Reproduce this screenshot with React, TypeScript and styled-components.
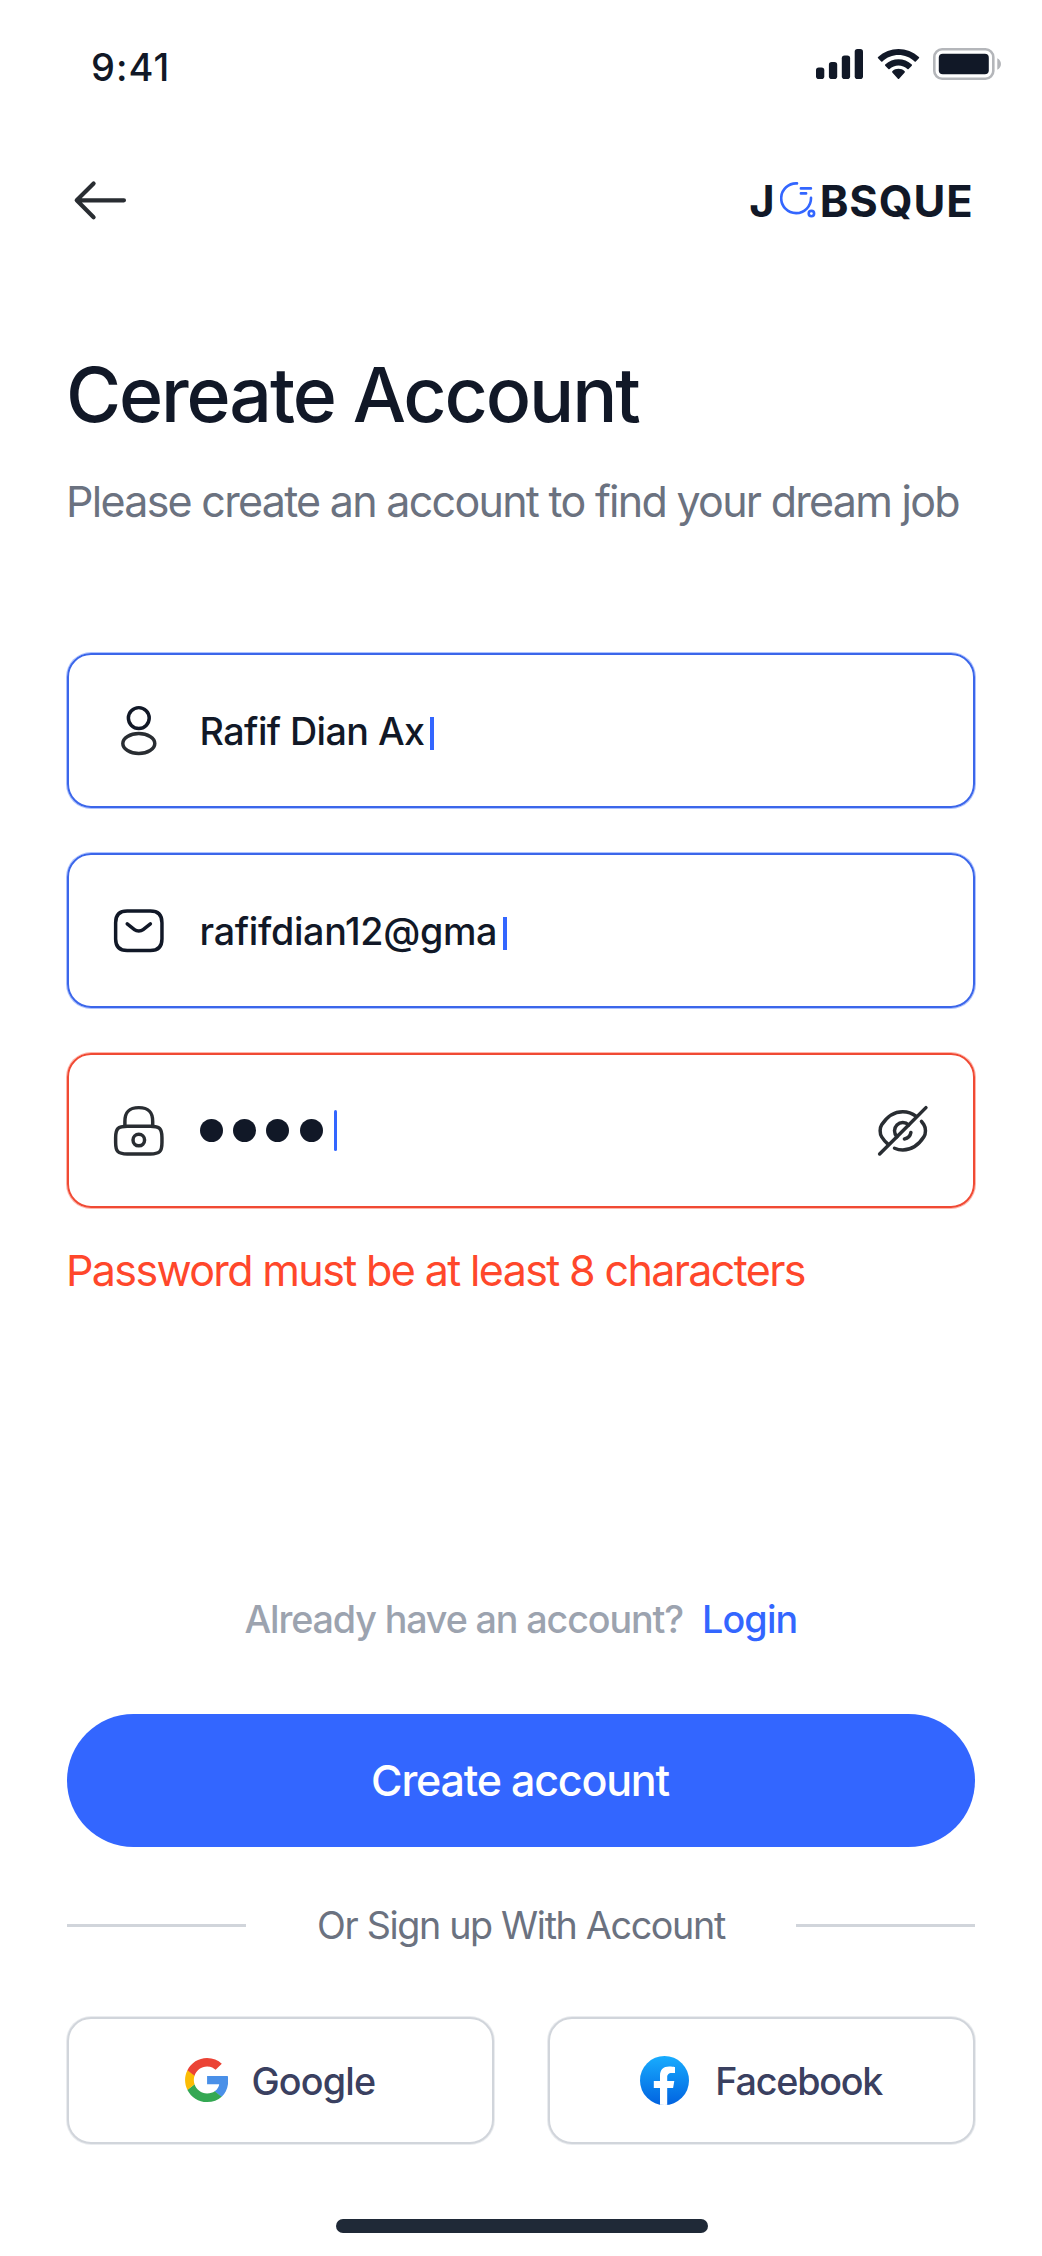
import React from "react";
import styled, { createGlobalStyle } from "styled-components";

const GlobalStyle = createGlobalStyle`
  *, *::before, *::after { box-sizing: border-box; }
  body { margin: 0; background: #fff; }
  svg { display: block; flex: none; }
`;

const color = {
  ink: "#111827",
  icon: "#292d32",
  muted: "#6b7280",
  faint: "#9ca3af",
  line: "#d1d5db",
  primary: "#3366ff",
  danger: "#ff472b",
  social: "#3a4060",
};

const Screen = styled.main`
  width: 1042px;
  height: 2256px;
  display: flex;
  flex-direction: column;
  background: #fff;
  color: ${color.ink};
  font-family: Inter, "Liberation Sans", sans-serif;
  white-space: nowrap;
  overflow: hidden;
`;

const StatusBar = styled.header`
  height: 133px;
  flex: none;
  padding: 0 41px 0 91px;
  display: flex;
  align-items: center;
  justify-content: space-between;
`;

const Clock = styled.span`
  font-size: 38px;
  font-weight: 500;
  letter-spacing: 1px;
`;

const StatusIcons = styled.div`
  display: flex;
  align-items: center;
  gap: 13.5px;
  margin-bottom: 5px;
`;

const TopBar = styled.nav`
  height: 134px;
  flex: none;
  padding: 0 68.5px 0 66.7px;
  display: flex;
  align-items: center;
  justify-content: space-between;
`;

const IconButton = styled.button`
  display: flex;
  padding: 0;
  border: 0;
  background: none;
`;

const Logo = styled.div`
  display: flex;
  align-items: center;
  font-size: 43.5px;
  line-height: 60px;
  font-weight: 700;
  letter-spacing: 0.9px;
`;

const LogoText = styled.span`
  padding-top: 1px;
`;

const LogoMark = styled.svg`
  margin: 0 4px 0 4px;
`;

const Content = styled.section`
  padding: 78px 67px 0;
  display: flex;
  flex-direction: column;
`;

const Title = styled.h1`
  margin: 0 0 0 -1px;
  font-size: 75.2px;
  line-height: 100px;
  font-weight: 500;
  letter-spacing: -2.12px;
`;

const Subtitle = styled.p`
  margin: 26px 0 0 -1px;
  color: ${color.muted};
  font-size: 43px;
  line-height: 60px;
  letter-spacing: -1.72px;
`;

const Form = styled.div`
  margin-top: 122px;
  display: flex;
  flex-direction: column;
  gap: 45px;
`;

const Field = styled.div<{ $invalid?: boolean }>`
  height: 155px;
  padding: 0 42px;
  display: flex;
  align-items: center;
  border: 2px solid ${(p) => (p.$invalid ? "#f04a34" : "#3b66ea")};
  border-radius: 24px;
  box-shadow: 0 0 0 1px ${(p) => (p.$invalid ? "rgba(255, 71, 43, .4)" : "rgba(51, 102, 255, .4)")};
`;

const FieldValue = styled.div<{ $tracking?: number }>`
  flex: 1;
  margin-left: 33px;
  display: flex;
  align-items: center;
  font-size: 37.7px;
  line-height: 50px;
  font-weight: 500;
  letter-spacing: ${(p) => p.$tracking ?? 0}px;
`;

const Caret = styled.span`
  width: 4px;
  height: 33px;
  margin: 6px 0 0 6px;
  background: ${color.primary};
`;

const ThinCaret = styled.span`
  width: 3px;
  height: 41px;
  margin-left: 11px;
  border-radius: 1.5px;
  background: ${color.primary};
`;

const Dots = styled.span`
  display: flex;
  gap: 10.4px;
`;

const Dot = styled.i`
  flex: none;
  width: 23px;
  height: 23px;
  border-radius: 50%;
  background: ${color.ink};
`;

const ErrorText = styled.p`
  margin: 32px 0 0 -1px;
  color: ${color.danger};
  font-size: 43px;
  line-height: 60px;
  letter-spacing: -1.64px;
`;

const Footer = styled.section`
  margin-top: 294px;
  padding: 0 67px;
  display: flex;
  flex-direction: column;
`;

const LoginRow = styled.div`
  display: flex;
  justify-content: center;
  gap: 19px;
  font-size: 37.7px;
  line-height: 50px;
  font-weight: 500;
`;

const Prompt = styled.span`
  color: ${color.faint};
  letter-spacing: -1.14px;
`;

const LoginLink = styled.a`
  color: ${color.primary};
  letter-spacing: -0.8px;
`;

const PrimaryButton = styled.button`
  height: 133px;
  margin-top: 70px;
  padding: 0 2px 2px 0;
  border: 0;
  border-radius: 67px;
  background: ${color.primary};
  color: #fff;
  font: 500 43px/60px Inter, "Liberation Sans", sans-serif;
  letter-spacing: -1.21px;
`;

const Divider = styled.div`
  margin-top: 53px;
  height: 50px;
  display: flex;
  align-items: center;
  justify-content: space-between;
  color: ${color.muted};
  font-size: 37.7px;
  line-height: 50px;
  letter-spacing: -1.35px;

  &::before,
  &::after {
    content: "";
    width: 179px;
    height: 3px;
    background: ${color.line};
  }
`;

const SocialRow = styled.div`
  margin-top: 67px;
  display: grid;
  grid-template-columns: 1fr 1fr;
  column-gap: 54px;
`;

const SocialButton = styled.button<{ $tracking: number; $gap: number }>`
  height: 127px;
  padding: 0 1px 0 0;
  display: flex;
  align-items: center;
  justify-content: center;
  gap: ${(p) => p.$gap}px;
  border: 2px solid ${color.line};
  border-radius: 24px;
  box-shadow: 0 0 0 1px rgba(209, 213, 219, 0.45);
  background: #fff;
  color: ${color.social};
  font: 500 37.7px/50px Inter, "Liberation Sans", sans-serif;
  letter-spacing: ${(p) => p.$tracking}px;
`;

const HomeIndicator = styled.div`
  width: 372px;
  height: 14px;
  margin: 75px 0 0 336px;
  border-radius: 7px;
  background: #1f2937;
`;

const LineIcon = ({ size = 55.6, children }: { size?: number; children: React.ReactNode }) => (
  <svg
    width={size}
    height={size}
    viewBox="0 0 24 24"
    fill="none"
    stroke={color.icon}
    strokeWidth="1.5"
    strokeLinecap="round"
    strokeLinejoin="round"
  >
    {children}
  </svg>
);

const SignalIcon = () => (
  <svg width="47" height="30" viewBox="0 0 47 30" fill={color.ink}>
    <rect x="0" y="18.5" width="8.3" height="11.5" rx="2.8" />
    <rect x="12.9" y="13" width="8.3" height="17" rx="2.8" />
    <rect x="25.8" y="6.5" width="8.3" height="23.5" rx="2.8" />
    <rect x="38.7" y="0" width="8.3" height="30" rx="2.8" />
  </svg>
);

const WifiIcon = () => (
  <svg width="43" height="31" viewBox="0 0 43 31" fill={color.ink}>
    <path d="M21.5 6.1c6 0 11.8 2.3 16.1 6.4.3.3.8.3 1.2 0l3.1-3.2c.4-.4.4-.9 0-1.2C30.5-2.7 12.5-2.7 1.1 8.1c-.4.3-.4.8 0 1.2l3.1 3.2c.4.3.9.3 1.2 0C9.7 8.4 15.5 6.1 21.5 6.1Z" />
    <path d="M21.5 16.4c3.3 0 6.5 1.2 8.9 3.5.4.3.9.3 1.2 0l3.2-3.2c.3-.4.3-.9 0-1.2-7.5-7-19.1-7-26.6 0-.3.3-.3.8 0 1.2l3.2 3.2c.3.3.8.3 1.2 0 2.4-2.3 5.6-3.5 8.9-3.5Z" />
    <path d="M27.7 23.4c.3-.3.3-.9 0-1.2-3.6-3.2-8.8-3.2-12.4 0-.3.3-.3.9 0 1.2l5.6 6.3c.3.4.9.4 1.2 0Z" />
  </svg>
);

const BatteryIcon = () => (
  <svg width="68" height="32" viewBox="0 0 68 32" fill="none">
    <rect x="1.3" y="1.3" width="59" height="29.4" rx="7.8" stroke="#b4b6ba" strokeWidth="2.6" />
    <rect x="5.8" y="5.8" width="50" height="20.4" rx="4" fill={color.ink} />
    <path d="M64.3 10.3v11.4c4.9-2.2 4.9-9.2 0-11.4Z" fill="#b4b6ba" />
  </svg>
);

const GoogleIcon = () => (
  <svg width="43.3" height="44.2" viewBox="0 0 256 262">
    <path fill="#4a90e8" d="M255.878 133.451c0-10.734-.871-18.567-2.756-26.69H130.55v48.448h71.947c-1.45 12.04-9.283 30.172-26.69 42.356l-.244 1.622 38.755 30.023 2.685.268c24.659-22.774 38.875-56.282 38.875-96.027" />
    <path fill="#34a853" d="M130.55 261.1c35.248 0 64.839-11.605 86.453-31.622l-41.196-31.913c-11.024 7.688-25.82 13.055-45.257 13.055-34.523 0-63.824-22.773-74.269-54.25l-1.531.13-40.298 31.187-.527 1.465C35.393 231.798 79.49 261.1 130.55 261.1" />
    <path fill="#fbbc05" d="M56.281 156.37c-2.756-8.123-4.351-16.827-4.351-25.82 0-8.994 1.595-17.697 4.206-25.82l-.073-1.73L15.26 71.312l-1.335.635C5.077 89.644 0 109.517 0 130.55s5.077 40.905 13.925 58.602l42.356-32.782" />
    <path fill="#eb4335" d="M130.55 50.479c24.514 0 41.05 10.589 50.479 19.438l36.844-35.974C195.245 12.91 165.798 0 130.55 0 79.49 0 35.393 29.301 13.925 71.947l42.211 32.783c10.59-31.477 39.891-54.251 74.414-54.251" />
  </svg>
);

const FacebookIcon = () => (
  <svg width="49" height="49" viewBox="0 0 49 49">
    <defs>
      <linearGradient id="fb" x1="0" y1="0" x2="0" y2="1">
        <stop offset="0" stopColor="#18acfe" />
        <stop offset="1" stopColor="#0163e0" />
      </linearGradient>
      <clipPath id="disc">
        <circle cx="24.5" cy="24.5" r="24.5" />
      </clipPath>
    </defs>
    <circle cx="24.5" cy="24.5" r="24.5" fill="url(#fb)" />
    <path
      clipPath="url(#disc)"
      fill="#fff"
      d="M20 49V31.9h-6.2V25H20v-5.300c0-6 3.500-9.100 9.100-9.100 2.600 0 5.900.5 5.900.5v5.900h-3.300c-3.300 0-4.500 2-4.500 4.100V25h7.100l-1.200 6.900h-5.900V49Z"
    />
  </svg>
);

export default function App() {
  return (
    <Screen>
      <GlobalStyle />
      <StatusBar>
        <Clock>9:41</Clock>
        <StatusIcons>
          <SignalIcon />
          <WifiIcon />
          <BatteryIcon />
        </StatusIcons>
      </StatusBar>

      <TopBar>
        <IconButton aria-label="Back">
          <LineIcon size={66.7}>
            <path d="M9.57 5.93 3.5 12l6.07 6.07M20.5 12H3.67" />
          </LineIcon>
        </IconButton>
        <Logo>
          <LogoText>J</LogoText>
          <LogoMark width="36" height="36" viewBox="0 0 36 36" fill="none" stroke={color.primary} strokeWidth="2.6" strokeLinecap="round">
            <path d="M17 1.4A14.9 14.9 0 1 0 31 15.8" />
            <path d="M20.9 6.4h10M20.9 11.4h5.2" />
            <circle cx="31.4" cy="31.6" r="2.7" />
          </LogoMark>
          <LogoText>BSQUE</LogoText>
        </Logo>
      </TopBar>

      <Content>
        <Title>Cereate Account</Title>
        <Subtitle>Please create an account to find your dream job</Subtitle>

        <Form>
          <Field>
            <LineIcon>
              <circle cx="12" cy="6.5" r="4.5" stroke={color.ink} />
              <ellipse cx="12" cy="17.5" rx="6.9" ry="4.3" />
            </LineIcon>
            <FieldValue $tracking={-0.58}>
              Rafif Dian Ax
              <Caret />
            </FieldValue>
          </Field>

          <Field>
            <LineIcon>
              <g stroke={color.ink}>
                <path d="M17 20.5H7C4 20.5 2 19 2 15.5V8.5C2 5 4 3.5 7 3.5H17C20 3.5 22 5 22 8.5V15.5C22 19 20 20.5 17 20.5Z" />
                <path d="M17 9 13.87 11.5C12.84 12.32 11.15 12.32 10.12 11.5L7 9" />
              </g>
            </LineIcon>
            <FieldValue $tracking={-0.33}>
              rafifdian12@gma
              <Caret />
            </FieldValue>
          </Field>

          <Field $invalid>
            <LineIcon>
              <path d="M6 10V8C6 4.69 7 2 12 2C17 2 18 4.69 18 8V10" />
              <path d="M17 22H7C3 22 2 21 2 17V15C2 11 3 10 7 10H17C21 10 22 11 22 15V17C22 21 21 22 17 22Z" />
              <circle cx="12" cy="16" r="2.5" />
            </LineIcon>
            <FieldValue>
              <Dots>
                <Dot />
                <Dot />
                <Dot />
                <Dot />
              </Dots>
              <ThinCaret />
            </FieldValue>
            <IconButton aria-label="Show password">
              <LineIcon>
                <path d="M14.53 9.47 9.47 14.53C8.82 13.88 8.42 12.99 8.42 12C8.42 10.02 10.02 8.42 12 8.42C12.99 8.42 13.88 8.82 14.53 9.47Z" />
                <path d="M17.82 5.77C16.07 4.45 14.07 3.73 12 3.73C8.47 3.73 5.18 5.81 2.89 9.41C1.99 10.82 1.99 13.19 2.89 14.6C3.68 15.84 4.6 16.91 5.6 17.77" />
                <path d="M8.42 19.53C9.56 20.01 10.77 20.27 12 20.27C15.53 20.27 18.82 18.19 21.11 14.59C22.01 13.18 22.01 10.81 21.11 9.4C20.78 8.88 20.42 8.39 20.05 7.93" />
                <path d="M15.51 12.7C15.25 14.11 14.1 15.26 12.69 15.52" />
                <path d="M9.47 14.53 2 22M22 2 14.53 9.47" />
              </LineIcon>
            </IconButton>
          </Field>
        </Form>

        <ErrorText>Password must be at least 8 characters</ErrorText>
      </Content>

      <Footer>
        <LoginRow>
          <Prompt>Already have an account?</Prompt>
          <LoginLink>Login</LoginLink>
        </LoginRow>
        <PrimaryButton>Create account</PrimaryButton>
        <Divider>Or Sign up With Account</Divider>
        <SocialRow>
          <SocialButton $tracking={-0.8} $gap={23.5}>
            <GoogleIcon />
            Google
          </SocialButton>
          <SocialButton $tracking={-1.2} $gap={26.5}>
            <FacebookIcon />
            Facebook
          </SocialButton>
        </SocialRow>
      </Footer>

      <HomeIndicator />
    </Screen>
  );
}
